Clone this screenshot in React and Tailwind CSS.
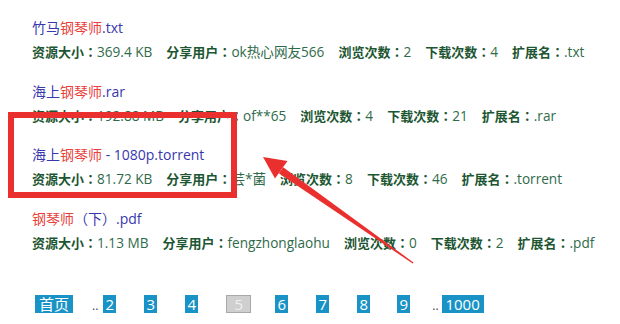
import React from "react";

const items = [
  { pre: "竹马", red: "钢琴师", post: ".txt", size: "369.4 KB", user: "ok热心网友566", view: "2", down: "4", ext: ".txt" },
  { pre: "海上", red: "钢琴师", post: ".rar", size: "192.88 MB", user: "of**65", view: "4", down: "21", ext: ".rar" },
  { pre: "海上", red: "钢琴师", post: " - 1080p.torrent", size: "81.72 KB", user: "芸*菌", view: "8", down: "46", ext: ".torrent" },
  { pre: "", red: "钢琴师", post: "（下）.pdf", size: "1.13 MB", user: "fengzhonglaohu", view: "0", down: "2", ext: ".pdf" },
];

function Seg({ label, value }) {
  return (
    <span className="whitespace-nowrap">
      <span className="font-bold text-[#1d5632]">
        {label}
        <span className="font-['Noto_Sans_CJK_JP']">：</span>
      </span>
      <span className="text-[13.6px] text-[#2f6b4a]">{value}</span>
    </span>
  );
}

const pages = [
  { t: "首页", ml: "ml-0", w: "w-[38px]" },
  { t: "..", dots: true, ml: "ml-[19px]" },
  { t: "2", ml: "ml-[5px]", w: "w-[13px]" },
  { t: "3", ml: "ml-[28px]", w: "w-[13px]" },
  { t: "4", ml: "ml-[28px]", w: "w-[13px]" },
  { t: "5", ml: "ml-[28px]", w: "w-[25px]", cur: true },
  { t: "6", ml: "ml-[24px]", w: "w-[13px]" },
  { t: "7", ml: "ml-[28px]", w: "w-[13px]" },
  { t: "8", ml: "ml-[28px]", w: "w-[13px]" },
  { t: "9", ml: "ml-[27px]", w: "w-[13px]" },
  { t: "..", dots: true, ml: "ml-[22px]" },
  { t: "1000", ml: "ml-[3px]", w: "w-[42px]" },
];

export default function App() {
  return (
    <div
      className="relative w-[620px] h-[324px] overflow-hidden bg-white"
      style={{ fontFamily: '"Open Sans", "Noto Sans CJK SC", sans-serif' }}
    >
      <div className="pl-[32px] pt-[18px] flex flex-col">
        {items.map((it, i) => (
          <div key={i} className="h-[63.7px] flex flex-col">
            <div className="h-[20px] leading-[20px] text-[14px] text-[#3838ad] whitespace-nowrap">
              {it.pre}
              <span className="text-[#e8403a]">{it.red}</span>
              {it.post}
            </div>
            <div className="mt-[4px] h-[20px] leading-[20px] text-[13px] flex gap-[14px]">
              <Seg label="资源大小" value={it.size} />
              <Seg label="分享用户" value={it.user} />
              <Seg label="浏览次数" value={it.view} />
              <Seg label="下载次数" value={it.down} />
              <Seg label="扩展名" value={it.ext} />
            </div>
          </div>
        ))}
      </div>

      <div className="absolute left-[35px] top-[295px] flex items-end">
        {pages.map((p, i) =>
          p.dots ? (
            <span key={i} className={`${p.ml} text-[12px] leading-[14px] text-[#444]`}>..</span>
          ) : (
            <span
              key={i}
              className={`${p.ml} ${p.w} h-[18px] flex items-center justify-center text-[15px] leading-none ${
                p.cur ? "bg-[#cfcfcf] border border-[#a8a8a8] text-[#f0f0f0]" : "bg-[#1993c6] text-white"
              }`}
            >
              {p.t}
            </span>
          )
        )}
      </div>

      <div className="absolute left-[8px] top-[112px] w-[229px] h-[86px] border-[6px] border-[#e9302e]" />

      <svg className="absolute left-0 top-0" width="620" height="324" viewBox="0 0 620 324">
        <polygon points="263,157 287.5,161 275,178.5" fill="#e9302e" />
        <polygon points="283.2,167.3 278.8,173.3 412.7,263.5 413.5,262.5" fill="#e9302e" />
      </svg>
    </div>
  );
}
